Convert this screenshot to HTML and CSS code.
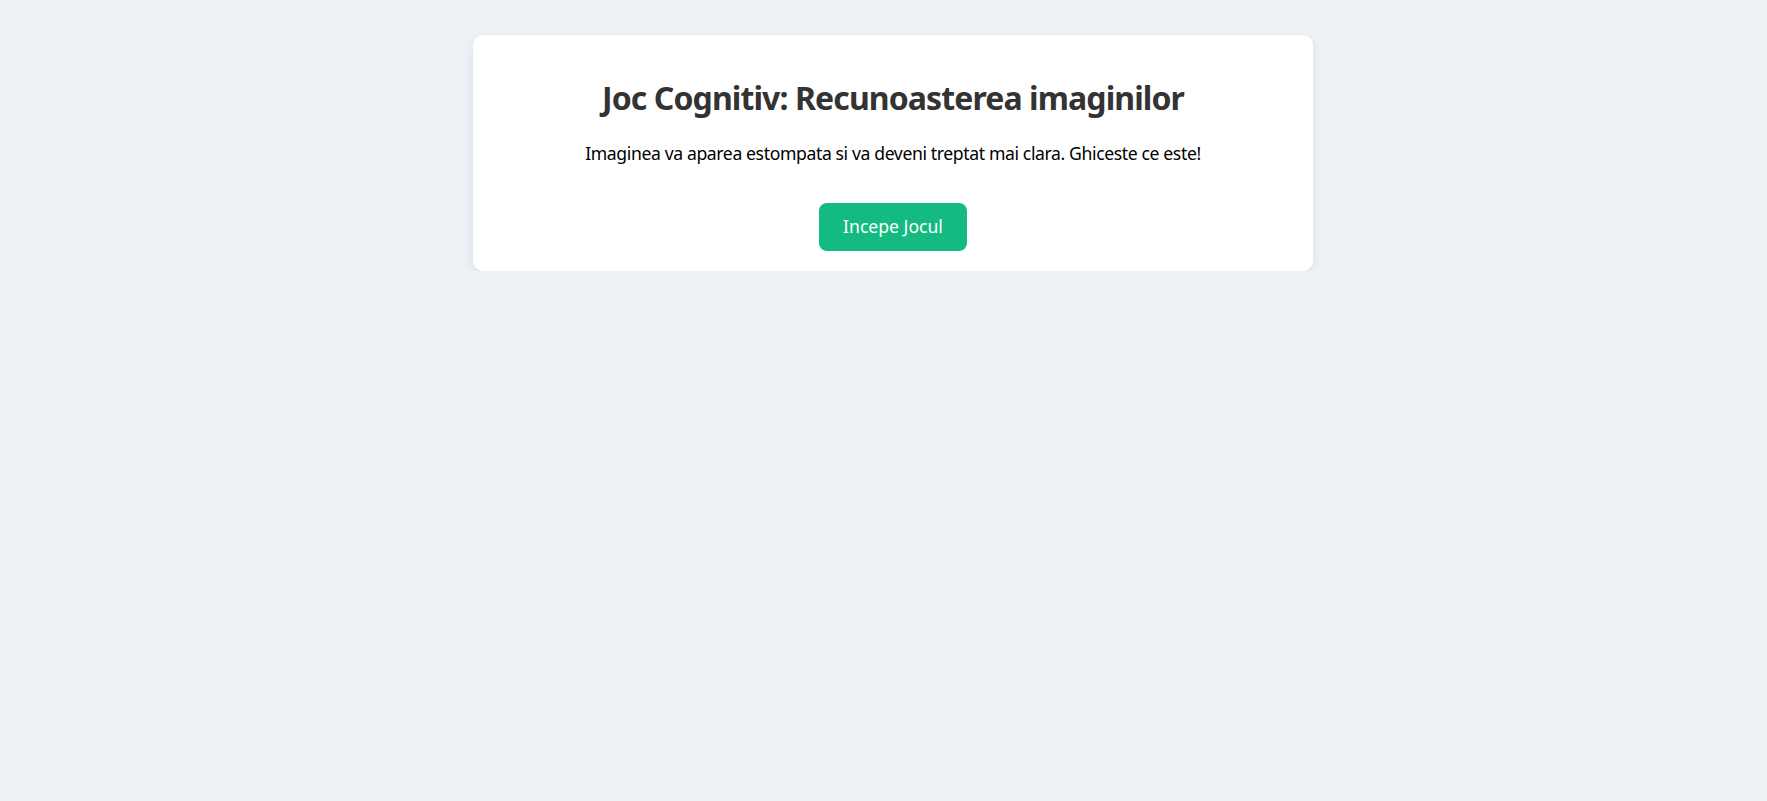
FILE: index.html
```html
<!DOCTYPE html>
<html lang="ro">
<head>
<meta charset="utf-8">
<title>Joc Cognitiv</title>
<link rel="stylesheet" href="styles.css">
</head>
<body>
<main class="card">
  <h1 class="title">Joc Cognitiv: Recunoasterea imaginilor</h1>
  <p class="intro">Imaginea va aparea estompata si va deveni treptat mai clara. Ghiceste ce este!</p>
  <div class="actions">
    <button class="start-btn" type="button">Incepe Jocul</button>
  </div>
</main>
</body>
</html>
```

FILE: styles.css
```css
html, body {
  margin: 0;
  background: #eef1f5;
}
body {
  padding: 35px 0 0 19px;
  font-family: "Noto Sans", "Open Sans", sans-serif;
  color: #000;
}
.card {
  width: 840px;
  box-sizing: border-box;
  margin: 0 auto;
  padding: 20px;
  background: #fff;
  border-radius: 10px;
  box-shadow: 0 4px 12px rgba(0, 0, 0, 0.08);
  text-align: center;
}
.title {
  font-size: 32px;
  line-height: 42.5px;
  font-weight: 700;
  letter-spacing: -0.9px;
  color: #333;
  margin: 22.4px 0 22.4px;
}
.intro {
  font-size: 17.6px;
  line-height: 23.4px;
  letter-spacing: -0.38px;
  margin: 0;
}
.actions {
  margin-top: 37.5px;
  display: flex;
  justify-content: center;
}
.start-btn {
  font-family: inherit;
  font-size: 17.6px;
  line-height: 23.4px;
  padding: 12px 24px;
  border: none;
  border-radius: 8px;
  background: #13bb81;
  color: #fff;
  cursor: pointer;
}
```
